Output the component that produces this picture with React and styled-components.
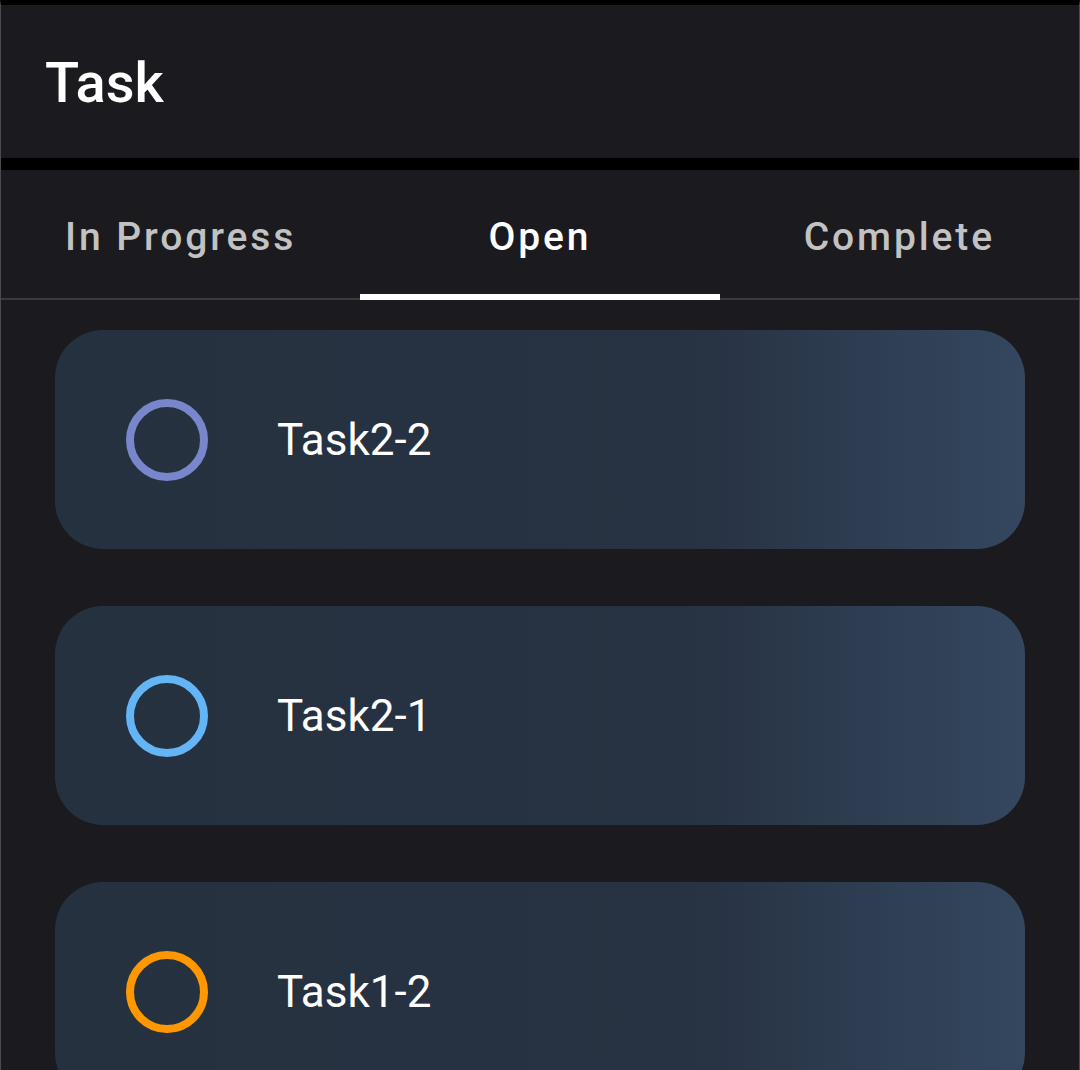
import React from 'react';
import styled, { createGlobalStyle } from 'styled-components';

const Global = createGlobalStyle`
	html, body {
		margin: 0;
		padding: 0;
		background: #1a1a1f;
		font-family: Roboto, "Liberation Sans", sans-serif;
	}
`;

const Screen = styled.div`
	height: 1070px;
	overflow: hidden;
	background: #1a1a1f;
	border-top: 5px solid #000;
	border-left: 1px solid #4a4a50;
	border-right: 1px solid #4a4a50;
	box-sizing: border-box;
`;

const Header = styled.header`
	height: 165px;
	display: flex;
	align-items: center;
	padding-left: 44px;
	border-bottom: 12px solid #000;
	box-sizing: border-box;
`;

const Title = styled.h1`
	margin: 0;
	color: #fff;
	font-size: 56px;
	font-weight: 500;
	padding-top: 2px;
`;

const TabBar = styled.nav`
	display: grid;
	grid-template-columns: repeat(3, 1fr);
	height: 130px;
	border-bottom: 2px solid #3a3a40;
	box-sizing: border-box;
`;

const Tab = styled.div`
	position: relative;
	display: flex;
	align-items: center;
	justify-content: center;
	color: ${(p) => (p.active ? '#ffffff' : '#c2c2c2')};
	font-size: 39px;
	font-weight: 500;
	letter-spacing: 2.9px;
	padding-top: 6px;

	&::after {
		content: '';
		display: ${(p) => (p.active ? 'block' : 'none')};
		position: absolute;
		left: 0;
		right: 0;
		bottom: -2px;
		height: 6px;
		background: #fff;
	}
`;

const List = styled.div`
	display: flex;
	flex-direction: column;
	gap: 57px;
	padding: 30px 54px 0 54px;
`;

const Card = styled.div`
	flex-shrink: 0;
	height: 219px;
	border-radius: 48px;
	background: linear-gradient(to right, #263140 0%, #273242 65%, #34475f 100%);
	display: flex;
	align-items: center;
	padding-left: 71px;
	box-sizing: border-box;
`;

const Ring = styled.div`
	width: 82px;
	height: 82px;
	border-radius: 50%;
	border: 8px solid ${(p) => p.color};
	box-sizing: border-box;
	flex-shrink: 0;
`;

const Label = styled.span`
	margin-left: 69px;
	color: #fff;
	font-size: 44px;
	font-weight: 400;
`;

const tasks = [
	{ name: 'Task2-2', color: '#7986cb' },
	{ name: 'Task2-1', color: '#64b5f6' },
	{ name: 'Task1-2', color: '#ff9800' },
];

const App = () => {
	return (
		<>
			<Global />
			<Screen>
				<Header>
					<Title>Task</Title>
				</Header>
				<TabBar>
					<Tab>In Progress</Tab>
					<Tab active>Open</Tab>
					<Tab>Complete</Tab>
				</TabBar>
				<List>
					{tasks.map((t) => (
						<Card key={t.name}>
							<Ring color={t.color} />
							<Label>{t.name}</Label>
						</Card>
					))}
				</List>
			</Screen>
		</>
	);
};

export default App;
